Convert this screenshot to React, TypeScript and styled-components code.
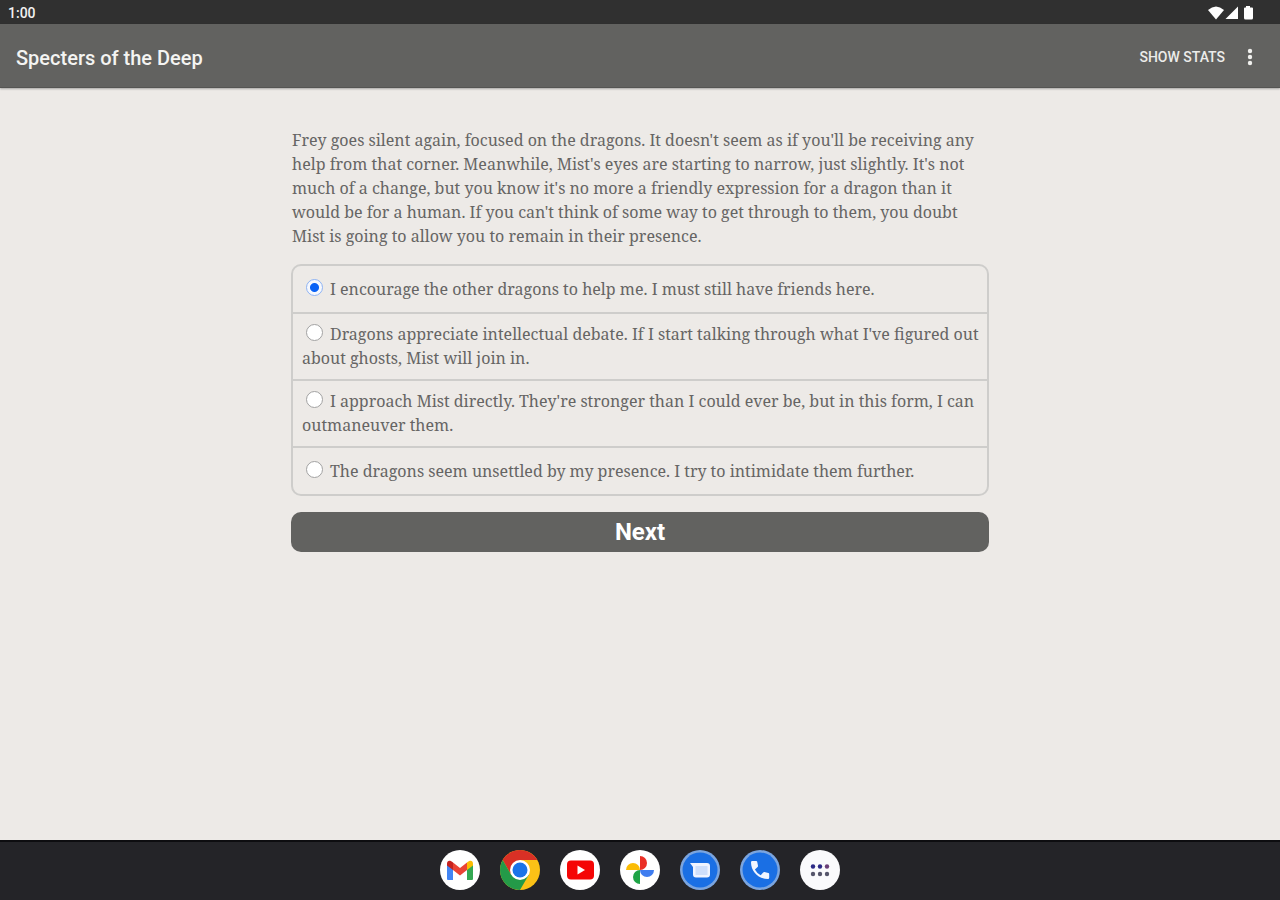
import React, { useState } from "react";
import styled, { createGlobalStyle } from "styled-components";

const GlobalStyle = createGlobalStyle`
  * { box-sizing: border-box; }
  body { margin: 0; background: #edeae7; }
`;

const Screen = styled.div`
  display: flex;
  flex-direction: column;
  min-height: 100vh;
  background: #edeae7;
  font-family: Roboto, "Liberation Sans", sans-serif;
`;

const StatusBar = styled.div`
  display: flex;
  align-items: center;
  justify-content: space-between;
  height: 24px;
  padding: 2px 24px 0 8px;
  background: #303030;
  color: #f2f2f2;
  font-size: 14px;
  font-weight: 500;
`;

const StatusIcons = styled.div`
  display: flex;
  align-items: center;
  gap: 1px;
`;

const AppBar = styled.header`
  display: flex;
  align-items: center;
  justify-content: space-between;
  height: 64px;
  padding: 2px 18px 0 16px;
  background: #626260;
  border-bottom: 1px solid #555553;
  box-shadow: 0 1px 2px rgba(0, 0, 0, 0.3);
  color: #f4f4f2;
`;

const Title = styled.h1`
  margin: 0;
  padding-top: 2px;
  font-size: 20px;
  font-weight: 500;
  line-height: 24px;
`;

const Actions = styled.div`
  display: flex;
  align-items: center;
  gap: 13px;
`;

const TextAction = styled.button`
  padding: 0;
  border: 0;
  background: none;
  color: #ececea;
  font: 500 14px/20px Roboto, "Liberation Sans", sans-serif;
  text-transform: uppercase;
`;

const IconAction = styled.button`
  display: flex;
  justify-content: center;
  width: 24px;
  padding: 0;
  border: 0;
  background: none;
`;

const Story = styled.main`
  flex: 1;
  width: 100%;
  max-width: 730px;
  margin: 0 auto;
  padding: 40px 16px;
  color: #666564;
  font-family: "Noto Serif", "DejaVu Serif Condensed", "DejaVu Serif", serif;
  font-size: 16px;
  line-height: 24px;
`;

const Passage = styled.p`
  margin: 0 0 16px;
  padding: 0 1px;
`;

const Choices = styled.fieldset`
  min-width: 0;
  margin: 0 0 16px;
  padding: 0;
  border: 2px solid #cecdcb;
  border-radius: 10px;
`;

const Choice = styled.div`
  display: flex;
  flex-direction: column;
  justify-content: center;
  min-height: 46px;
  padding: 8px 6px 9px 9px;

  & + & {
    min-height: 48px;
    border-top: 2px solid #cecdcb;
  }
`;

const Radio = styled.input`
  appearance: none;
  width: 17px;
  height: 17px;
  margin: 0 7px 0 4px;
  border: 1px solid ${(p) => (p.checked ? "#8fb4f5" : "#a2a2a2")};
  border-radius: 50%;
  background: ${(p) =>
    p.checked ? "radial-gradient(circle, #0a62f5 4px, #f6f8fd 5px)" : "#fff"};
  vertical-align: -1px;
`;

const NextButton = styled.button`
  display: block;
  width: 100%;
  height: 40px;
  padding: 0;
  border: 0;
  border-radius: 10px;
  background: #626260;
  color: #fff;
  font: 700 24px/40px Roboto, "Noto Sans", sans-serif;
`;

const Dock = styled.nav`
  display: flex;
  align-items: center;
  justify-content: center;
  height: 60px;
  box-shadow: inset 0 2px #0d0d10;
  background: #242428;
`;

const DockApps = styled.div`
  display: flex;
  gap: 20px;
`;

const DockButton = styled.button`
  width: 40px;
  height: 40px;
  padding: 0;
  border: 0;
  background: none;

  svg { display: block; }
`;

const passage =
  "Frey goes silent again, focused on the dragons. It doesn't seem as if you'll be receiving any help from that corner. Meanwhile, Mist's eyes are starting to narrow, just slightly. It's not much of a change, but you know it's no more a friendly expression for a dragon than it would be for a human. If you can't think of some way to get through to them, you doubt Mist is going to allow you to remain in their presence.";

const choices = [
  "I encourage the other dragons to help me. I must still have friends here.",
  "Dragons appreciate intellectual debate. If I start talking through what I've figured out about ghosts, Mist will join in.",
  "I approach Mist directly. They're stronger than I could ever be, but in this form, I can outmaneuver them.",
  "The dragons seem unsettled by my presence. I try to intimidate them further.",
];

const apps: { name: string; art: React.ReactNode }[] = [
  {
    name: "Gmail",
    art: (
      <>
        <circle cx="20" cy="20" r="20" fill="#fff" />
        <path d="M7 14v15q0 1 1 1h5V18z" fill="#4285f4" />
        <path d="M33 14v15q0 1-1 1h-5V18z" fill="#34a853" />
        <path d="M13 12.500l7 5.500 7-5.500v7.500l-7 5.500-7-5.500z" fill="#ea4335" />
        <path d="M7 13.500c0-3 3-4 6-1V20l-6-4.500z" fill="#c5221f" />
        <path d="M33 13.500c0-3-3-4-6-1V20l6-4.500z" fill="#fbbc04" />
      </>
    ),
  },
  {
    name: "Chrome",
    art: (
      <>
        <circle cx="20" cy="20" r="20" fill="#fbc116" />
        <path d="M20 10H37.300A20 20 0 0 0 2.700 10L11.300 25z" fill="#d93025" />
        <path d="M2.700 10A20 20 0 0 0 20 40L28.700 25 20 20 11.300 25z" fill="#249a48" />
        <circle cx="20" cy="20" r="10" fill="#fff" />
        <circle cx="20" cy="20" r="7.500" fill="#1a73e8" />
      </>
    ),
  },
  {
    name: "YouTube",
    art: (
      <>
        <circle cx="20" cy="20" r="20" fill="#fff" />
        <rect x="7" y="10.500" width="27" height="19" rx="4" fill="#f50606" />
        <path d="M17.500 15.500v9l7.500-4.500z" fill="#fff" />
      </>
    ),
  },
  {
    name: "Photos",
    art: (
      <>
        <circle cx="20" cy="20" r="20" fill="#fff" />
        <path d="M20 6a7 7 0 0 1 0 14z" fill="#ea2f25" />
        <path d="M34 20a7 7 0 0 1-14 0z" fill="#3f7df0" />
        <path d="M20 34a7 7 0 0 1 0-14z" fill="#1ea446" />
        <path d="M6 20a7 7 0 0 1 14 0z" fill="#fbbc04" />
      </>
    ),
  },
  {
    name: "Messages",
    art: (
      <>
        <circle cx="20" cy="20" r="20" fill="#7ba5df" />
        <circle cx="20" cy="20" r="17.500" fill="#1a6fe4" />
        <path d="M10 13h17q3 0 3 3v8.500q0 3-3 3H16q-3 0-3-3V17z" fill="#f0f4ff" />
        <path d="M15.500 16h12v9h-12z" fill="#cfdffb" />
      </>
    ),
  },
  {
    name: "Phone",
    art: (
      <>
        <circle cx="20" cy="20" r="20" fill="#7ba5df" />
        <circle cx="20" cy="20" r="17.500" fill="#1a6fe4" />
        <path
          d="M12.200 11h4q.8 0 1 .8l.8 4q.1.700-.4 1.200l-2.700 2.400q2 3.800 5.800 5.800l2.500-2.700q.5-.5 1.200-.4l4 .9q.8.200.8 1v3.800q0 1.200-1.200 1.200C18.500 29 11 21.500 11 12.200q0-1.200 1.200-1.200z"
          fill="#f1f5ff"
        />
      </>
    ),
  },
  {
    name: "All apps",
    art: (
      <>
        <circle cx="20" cy="20" r="20" fill="#fafafc" />
        {[13, 20, 27].map((x, i) => (
          <React.Fragment key={x}>
            <circle cx={x} cy="16.500" r="2.200" fill={i === 2 ? "#6b3f78" : "#2c2a86"} />
            <circle cx={x} cy="24" r="2.200" fill="#55556b" />
          </React.Fragment>
        ))}
      </>
    ),
  },
];

export default function App() {
  const [selected, setSelected] = useState(0);

  return (
    <Screen>
      <GlobalStyle />
      <StatusBar>
        <span>1:00</span>
        <StatusIcons>
          <svg width="16" height="14" viewBox="0 0 16 14" fill="#fff" aria-hidden="true">
            <path d="M0 4Q8-3 16 4L8 13.500z" />
          </svg>
          <svg width="14" height="14" viewBox="0 0 14 14" fill="#fff" aria-hidden="true">
            <path d="M13 .5V13H.5z" />
          </svg>
          <svg width="16" height="14" viewBox="0 0 16 14" fill="#fff" aria-hidden="true">
            <path d="M6 0h4v1.500h2q1 0 1 1V12q0 1.500-1.500 1.500h-6Q4 13.500 4 12V2.500q0-1 1-1h1z" />
          </svg>
        </StatusIcons>
      </StatusBar>
      <AppBar>
        <Title>Specters of the Deep</Title>
        <Actions>
          <TextAction type="button">Show stats</TextAction>
          <IconAction type="button" aria-label="More options">
            <svg width="6" height="20" viewBox="0 0 6 20" fill="#f0f0ee">
              <circle cx="3" cy="4" r="2.200" />
              <circle cx="3" cy="10" r="2.200" />
              <circle cx="3" cy="16" r="2.200" />
            </svg>
          </IconAction>
        </Actions>
      </AppBar>
      <Story>
        <Passage>{passage}</Passage>
        <Choices aria-label="Choices">
          {choices.map((text, i) => (
            <Choice key={text}>
              <label>
                <Radio
                  type="radio"
                  name="choice"
                  checked={selected === i}
                  onChange={() => setSelected(i)}
                />
                {text}
              </label>
            </Choice>
          ))}
        </Choices>
        <NextButton type="button">Next</NextButton>
      </Story>
      <Dock aria-label="Apps">
        <DockApps>
          {apps.map((app) => (
            <DockButton key={app.name} type="button" aria-label={app.name}>
              <svg width="40" height="40" viewBox="0 0 40 40">
                {app.art}
              </svg>
            </DockButton>
          ))}
        </DockApps>
      </Dock>
    </Screen>
  );
}
